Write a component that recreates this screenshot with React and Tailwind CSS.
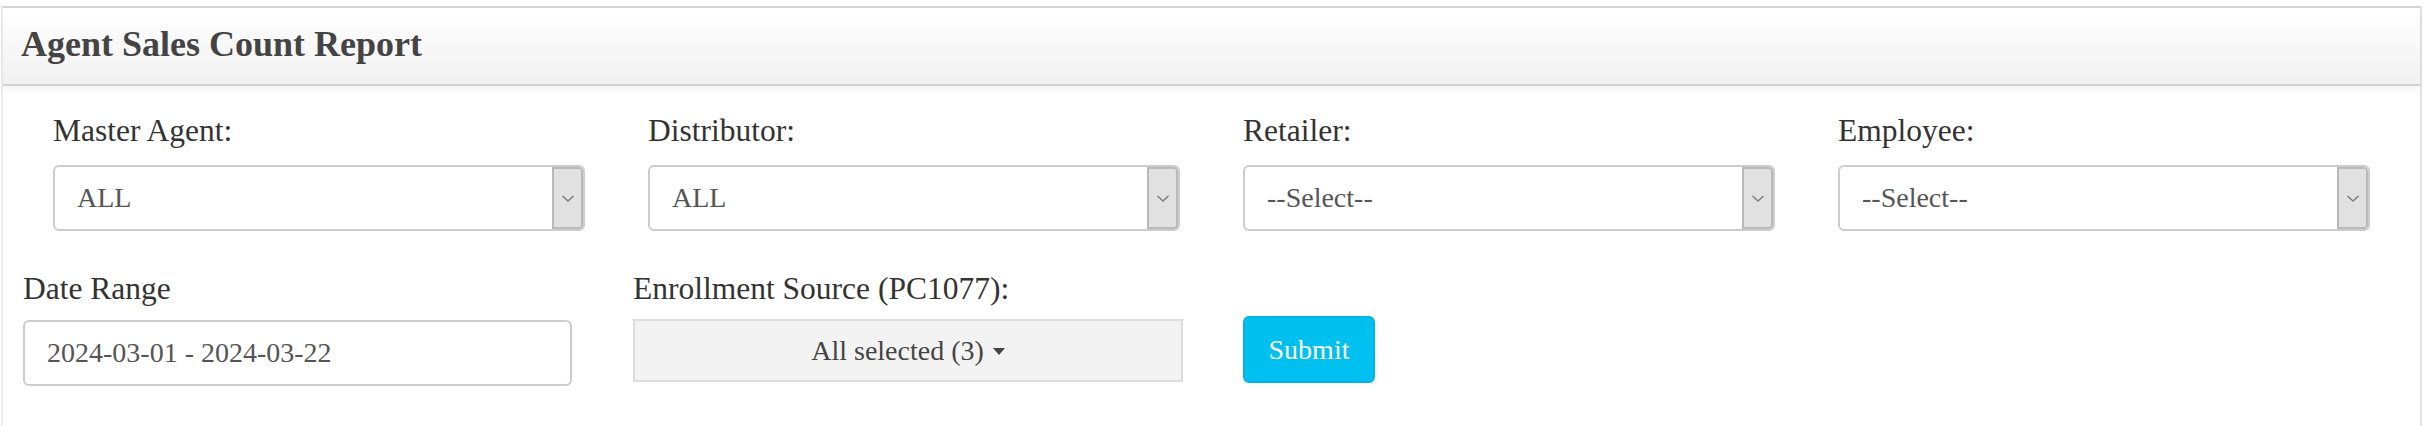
import React from 'react';

const Chevron = () => (
    <svg width="14" height="9" viewBox="0 0 14 9" fill="none" stroke="#7d7d7d" strokeWidth="1.5">
        <path d="M1.5 2l5.5 5 5.5-5" />
    </svg>
);

const SelectBox = ({ value }) => (
    <div className="flex h-[66px] w-[532px] overflow-hidden rounded-[6px] border-2 border-[#cccccc] bg-white">
        <div className="flex-1 pl-[22px] text-[28px] leading-[62px] text-[#555555]">{value}</div>
        <div className="flex w-[31px] items-center justify-center rounded-r-[4px] border-2 border-[#b9b9b9] bg-[#e1e1e1]">
            <Chevron />
        </div>
    </div>
);

const filters = [
    { label: 'Master Agent:', value: 'ALL' },
    { label: 'Distributor:', value: 'ALL' },
    { label: 'Retailer:', value: '--Select--' },
    { label: 'Employee:', value: '--Select--' },
];

const App = () => {
    return (
        <div className="h-[426px] w-full overflow-hidden bg-white pt-[6px] pl-[1px] pr-[6px] font-serif">
            <div className="h-[500px] border-x-2 border-t-2 border-l-[#ececec] border-r-[#e2e2e2] border-t-[#d4d4d4] bg-white font-['Liberation_Serif']">
                {/* Header */}
                <div className="h-[78px] border-b-2 border-[#d3d3d3] bg-gradient-to-b from-[#ffffff] to-[#f1f1f1] pl-[18px] shadow-[0_3px_6px_rgba(0,0,0,0.05)]">
                    <h1 className="pb-[4px] text-[36px] font-bold leading-[72px] text-[#444444]">Agent Sales Count Report</h1>
                </div>

                <div className="pt-[27px]">
                    {/* Row 1 */}
                    <div className="flex gap-[63px] pl-[50px]">
                        {filters.map((f) => (
                            <div key={f.label} className="w-[532px]">
                                <label className="block h-[36px] text-[31.5px] leading-[36px] text-[#333333]">{f.label}</label>
                                <div className="mt-[16px]">
                                    <SelectBox value={f.value} />
                                </div>
                            </div>
                        ))}
                    </div>

                    {/* Row 2 */}
                    <div className="mt-[40px] flex items-end pl-[20px]">
                        <div className="w-[549px]">
                            <label className="block h-[36px] text-[31.5px] leading-[36px] text-[#333333]">Date Range</label>
                            <div className="mt-[13px] h-[66px] rounded-[6px] border-2 border-[#cccccc] bg-white pl-[22px] text-[28px] leading-[62px] text-[#555555]">
                                2024-03-01 - 2024-03-22
                            </div>
                        </div>
                        <div className="ml-[61px] w-[550px] self-start">
                            <label className="block h-[36px] text-[31.5px] leading-[36px] text-[#333333]">Enrollment Source (PC1077):</label>
                            <button className="mt-[12px] flex h-[63px] w-full items-center justify-center border-2 border-[#dddddd] bg-[#f3f3f3] text-[28px] text-[#444444]">
                                All selected (3)
                                <span className="ml-[9px] mt-[2px] inline-block border-x-[6px] border-t-[7px] border-x-transparent border-t-[#444444]" />
                            </button>
                        </div>
                        <button className="mb-[3px] ml-[60px] h-[67px] w-[132px] rounded-[6px] border-2 border-[#00b3e3] bg-[#00c0ef] text-[28px] text-white">
                            Submit
                        </button>
                    </div>
                </div>
            </div>
        </div>
    );
};

export default App;
